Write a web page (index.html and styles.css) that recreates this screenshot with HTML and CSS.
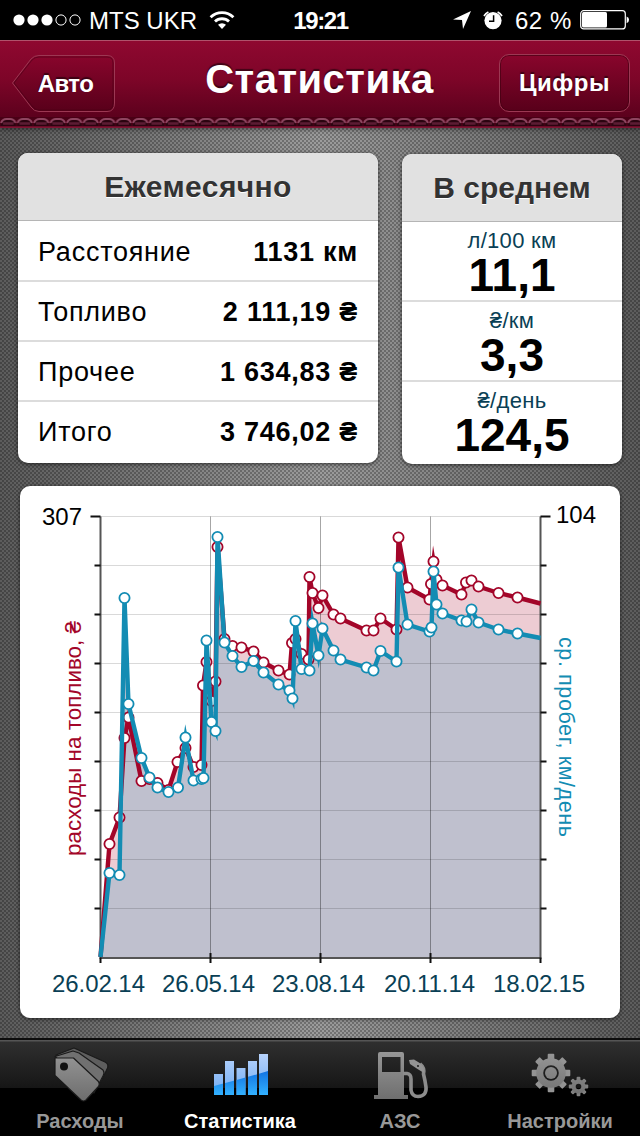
FILE: index.html
```html
<!DOCTYPE html>
<html lang="ru">
<head>
  <meta charset="UTF-8">
  <meta name="viewport" content="width=device-width, initial-scale=1.0">
  <title>Статистика</title>
  <link rel="stylesheet" href="styles.css">
</head>
<body>
  <!-- Status bar -->
  <div class="status-bar">
    <div class="status-left">
      <svg class="signal" width="68" height="12" viewBox="0 0 68 12">
        <g fill="#fff">
          <circle cx="6" cy="6" r="5.6"/>
          <circle cx="20" cy="6" r="5.6"/>
          <circle cx="34" cy="6" r="5.6"/>
        </g>
        <g fill="none" stroke="#fff">
          <circle cx="48" cy="6" r="5.1"/>
          <circle cx="62" cy="6" r="5.1"/>
        </g>
      </svg>
      <span class="carrier">MTS UKR</span>
      <svg class="wifi" width="26" height="20" viewBox="0 0 26 20">
        <g fill="none" stroke="#fff" stroke-width="2.8">
          <path d="M1.6 7.2 A16.3 16.3 0 0 1 24.4 7.2"/>
          <path d="M6 11.6 A10 10 0 0 1 20 11.6"/>
        </g>
        <path d="M9 14.8 A5.8 5.8 0 0 1 17 14.8 L13 19 Z" fill="#fff"/>
      </svg>
    </div>
    <span class="clock">19:21</span>
    <div class="status-right">
      <svg width="18" height="18" viewBox="0 0 18 18"><path d="M18 0 L0 8.4 L9 9 L10 18 Z" fill="#fff"/></svg>
      <svg class="alarm" width="20" height="19" viewBox="0 0 20 19">
        <circle cx="10" cy="9.6" r="8.6" fill="#fff"/>
        <path d="M1 5 A11 11 0 0 1 5.4 1 M14.6 1 A11 11 0 0 1 19 5" fill="none" stroke="#fff" stroke-width="1.7"/>
        <path d="M10.6 4.2 V10.2 H6" fill="none" stroke="#000" stroke-width="1.5"/>
      </svg>
      <span class="percent">62 %</span>
      <svg width="50" height="20" viewBox="0 0 50 20">
        <rect x="0.7" y="0.7" width="44.6" height="18.2" rx="3" fill="none" stroke="#fff" stroke-width="1.2"/>
        <rect x="2" y="2" width="25" height="15.6" rx="1.5" fill="#fff"/>
        <path d="M46.6 6.4 A3.6 3.6 0 0 1 46.6 13.2 Z" fill="#fff"/>
      </svg>
    </div>
  </div>

  <!-- Navigation bar -->
  <header class="nav-bar">
    <div class="nav-row">
      <button class="nav-button back">
        <svg class="back-shape" width="106" height="60" viewBox="0 0 106 60">
          <defs>
            <linearGradient id="backFill" x1="0" y1="0" x2="0" y2="1">
              <stop offset="0" stop-color="#89052c"/>
              <stop offset="1" stop-color="#58001a"/>
            </linearGradient>
          </defs>
          <path d="M1.5 29 L20 5 Q23 1.5 28 1.5 H96 Q103.5 1.5 103.5 9 V49 Q103.5 57.5 96 57.5 H28 Q23 57.5 20 53 Z" fill="url(#backFill)" stroke="#9c3853" stroke-width="1"/>
          <path d="M3 29 L21 6 Q24 3 28 3 H96 Q102 3 102 9 V49 Q102 56 96 56 H28 Q24 56 21 52 Z" fill="none" stroke="#4a0015" stroke-opacity="0.6"/>
        </svg>
        <span class="back-label">Авто</span>
      </button>
      <h1>Статистика</h1>
      <button class="nav-button next">Цифры</button>
    </div>
    <svg class="stitches" width="640" height="10" viewBox="0 0 640 10">
      <defs>
        <pattern id="stitch" width="16.5" height="10" patternUnits="userSpaceOnUse">
          <rect width="16.5" height="10" fill="#4a0016"/>
          <path d="M0.5 9 Q1 2 6 1.5 H10.500 Q15.500 2 16 9 Z" fill="#2b0410"/>
          <path d="M1 6 Q2.500 2 6.500 2 H10 Q14 2 15.500 6" fill="none" stroke="#8f4560" stroke-width="2"/>
          <path d="M3 6.500 H13.500" stroke="#5c1c33" stroke-width="2.500"/>
          <path d="M0 9.500 H16.500" stroke="#6b0a28"/>
        </pattern>
      </defs>
      <rect width="640" height="10" fill="url(#stitch)"/>
    </svg>
  </header>

  <main class="content">
    <div class="cards">
      <section class="card monthly">
        <h2>Ежемесячно</h2>
        <div class="row"><span>Расстояние</span><b>1131 км</b></div>
        <div class="row"><span>Топливо</span><b>2 111,19 ₴</b></div>
        <div class="row"><span>Прочее</span><b>1 634,83 ₴</b></div>
        <div class="row"><span>Итого</span><b>3 746,02 ₴</b></div>
      </section>
      <section class="card average">
        <h2>В среднем</h2>
        <div class="stat"><span>л/100 км</span><b>11,1</b></div>
        <div class="stat"><span>₴/км</span><b>3,3</b></div>
        <div class="stat"><span>₴/день</span><b>124,5</b></div>
      </section>
    </div>

    <section class="card chart-card">
      <svg id="chart" width="600" height="532" viewBox="20 486 600 532">
        <g id="areas"></g>
        <g id="grid"></g>
        <g id="axes"></g>
        <g id="lines"></g>
        <g class="scale">
          <text x="42" y="525" textLength="40" lengthAdjust="spacingAndGlyphs">307</text>
          <text x="556" y="523" textLength="40" lengthAdjust="spacingAndGlyphs">104</text>
        </g>
        <g class="dates">
          <text x="52" y="992" textLength="93">26.02.14</text>
          <text x="162" y="992" textLength="93">26.05.14</text>
          <text x="272" y="992" textLength="93">23.08.14</text>
          <text x="384" y="992" textLength="91">20.11.14</text>
          <text x="493" y="992" textLength="92">18.02.15</text>
        </g>
        <text class="axis-title red" transform="translate(80.5 856) rotate(-90)" textLength="235" lengthAdjust="spacingAndGlyphs">расходы на топливо, ₴</text>
        <text class="axis-title blue" transform="translate(558.5 637) rotate(90)" textLength="200">ср. пробег, км/день</text>
      </svg>
    </section>
  </main>

  <!-- Tab bar -->
  <nav class="tab-bar">
    <a class="tab">
      <svg width="60" height="60" viewBox="50 1044 60 60">
        <defs>
          <linearGradient id="iconGray" gradientUnits="userSpaceOnUse" x1="0" y1="1046" x2="0" y2="1102">
            <stop offset="0" stop-color="#9c9c9c"/>
            <stop offset="1" stop-color="#6c6c6c"/>
          </linearGradient>
        </defs>
        <g stroke="#1a1a1a" stroke-width="1.2" stroke-linejoin="round">
          <path d="M56 1055 L74 1048 L105 1062 Q109 1064 107.5 1068 L101 1082 Z" fill="#5e5e5e"/>
          <path d="M55 1056.5 L73 1051 L79 1053 L103 1070 Q105 1073 103 1076 L94 1093 Z" fill="#707070"/>
          <path d="M55 1058 H73.5 L98 1081 Q100.5 1084 98 1087 L86 1100 Q83.5 1102 81 1100 L55 1075.5 Z" fill="url(#iconGray)"/>
        </g>
        <circle cx="64" cy="1066.5" r="4" fill="#111"/>
      </svg>
      <span>Расходы</span>
    </a>
    <a class="tab active">
      <svg width="60" height="60" viewBox="210 1044 60 60">
        <defs>
          <linearGradient id="barTop" x1="0" y1="0" x2="0" y2="1">
            <stop offset="0" stop-color="#b6d2fb"/>
            <stop offset="1" stop-color="#71acf3"/>
          </linearGradient>
          <linearGradient id="barBottom" x1="0" y1="0" x2="0" y2="1">
            <stop offset="0" stop-color="#1273e2"/>
            <stop offset="1" stop-color="#32b1ff"/>
          </linearGradient>
          <clipPath id="bars">
            <path d="M214 1074h9v21h-9z M225 1061h9v34h-9z M236.5 1068h9v27h-9z M248 1061h9v34h-9z M259 1054h9v41h-9z"/>
          </clipPath>
        </defs>
        <g clip-path="url(#bars)">
          <rect x="214" y="1054" width="54" height="41" fill="url(#barTop)"/>
          <path d="M214 1086 Q242 1079 268 1071 V1095 H214 Z" fill="url(#barBottom)"/>
        </g>
      </svg>
      <span>Статистика</span>
    </a>
    <a class="tab">
      <svg width="60" height="60" viewBox="370 1044 60 60">
        <path fill-rule="evenodd" d="M378 1054 Q378 1052 380 1052 H402 Q404 1052 404 1054 V1095 H408 V1099 H374 V1095 H378 Z M382 1057 V1072 H400.5 V1057 Z" fill="url(#iconGray)"/>
        <path d="M403 1073.5 H407 Q411 1074 411 1079 V1090 Q412 1096.5 418 1096.5 Q427 1096 426 1087 Q425 1080 423.5 1074 Q425 1068 420 1064" fill="none" stroke="#8c8c8c" stroke-width="3.6"/>
        <path d="M409 1060 L414 1059.5 L420.5 1063.5 Q425 1068 424 1073 L417.5 1069 L410 1064 Z" fill="#949494"/>
        <circle cx="418" cy="1066" r="0.9" fill="#111"/>
      </svg>
      <span>АЗС</span>
    </a>
    <a class="tab">
      <svg width="60" height="60" viewBox="530 1044 60 60">
        <g id="gears" fill="url(#iconGray)" stroke="url(#iconGray)"></g>
      </svg>
      <span>Настройки</span>
    </a>
  </nav>

  <script>
    // points are [x, y] in chart units, y grows downwards
    const cost = [
      [100.5,957],[109.5,844],[119.5,817.5],[124.5,738],[128.5,717.5],[141.5,781],[149.5,779],[157.5,783],
      [168.5,790],[177.5,762],[185.5,748],[193.5,767],[201.5,765],[203,685.5],[206.5,662],[211.5,701],
      [215.5,681.5],[217.5,547],[224.5,639],[232.5,646],[241.5,647.5],[253.5,651.5],[263.5,662.5],
      [278.5,670.5],[289.5,674.5],[292,643],[295.5,639],[301.5,654],[308.5,659.5],[309.5,577],
      [312.5,593],[318.5,608],[322.5,595.5],[333.5,614.5],[340.5,618.5],[366.5,630.5],[373.5,630.5],
      [380.5,618.5],[396.5,629.5],[398.5,537.5],[407.5,587.5],[429.5,599.5],[431,584],[433.5,561.5],
      [436.5,579.5],[442.5,585.5],[461.5,594.5],[466,582.5],[471.5,580.5],[478.5,586.5],[498.5,593],
      [517.5,597.5],[540.5,603.5]
    ];
    const mileage = [
      [100.5,957],[109.5,873],[119.5,875],[124.5,598],[128.5,704],[141.5,758],[149.5,777.5],[157.5,787.5],
      [168.5,792],[178,787.5],[185.5,737.5],[193.5,780.5],[201.5,779],[203.5,778],[206.5,640.5],[211.5,722],
      [215.5,731],[217.5,537],[224.5,642.5],[232.5,656],[241.5,667],[253.5,661],[263.5,672.5],
      [278.5,684.5],[289.5,690.5],[292.5,698.5],[295.5,621],[301.5,669],[309.5,670.5],[312.5,623.5],
      [318.5,655.5],[322.5,628.5],[333.5,650.5],[340.5,659.5],[366.5,667.5],[373.5,670.5],[380.5,651],
      [396.5,661.5],[398.5,567.5],[407.5,624.5],[429.5,631.5],[431.5,627.5],[433.5,571.5],[436.5,604.5],
      [442.5,613.5],[461.5,620.5],[466.5,621.5],[471.5,609.5],[478.5,622.5],[498.5,629.5],[517.5,633.5],
      [540.5,638]
    ];

    const left = 100.5, right = 540.5, top_ = 516.5, bottom = 957.5;

    function drawArea(points, name) {
      return `<polygon class="${name}" points="${points.join(' ')} ${right},${bottom} ${left},${bottom}"/>`;
    }

    function drawLine(points, name) {
      const dots = points.slice(1, -1).map(p => `<circle cx="${p[0]}" cy="${p[1]}" r="5.1"/>`).join('');
      return `<g class="${name}"><polyline points="${points.join(' ')}"/>${dots}</g>`;
    }

    let grid = '', axes = '';
    for (let i = 0; i < 9; i++) {
      const y = top_ + i * 49;
      const len = i === 0 ? 10 : 6;
      grid += `<path class="h" d="M${left} ${y}H${right}"/>`;
      axes += `<path class="tick" d="M${left - len} ${y}H${left} M${right} ${y}H${right + len}"/>`;
    }
    for (let i = 0; i < 5; i++) {
      const x = left + i * 110;
      if (i > 0 && i < 4) grid += `<path class="v" d="M${x} ${top_}V${bottom}"/>`;
      axes += `<path class="tick" d="M${x} ${i % 4 ? 953 : bottom}V963"/>`;
    }
    axes = `<path class="frame" d="M${left} ${top_}V${bottom + 0.5}H${right}V${top_}"/>` + axes;

    document.getElementById('areas').innerHTML = drawArea(cost, 'area-cost') + drawArea(mileage, 'area-mileage');
    document.getElementById('grid').innerHTML = grid;
    document.getElementById('axes').innerHTML = axes;
    document.getElementById('lines').innerHTML = drawLine(cost, 'cost') + drawLine(mileage, 'mileage');

    // a gear is a thick ring with eight teeth round it
    function drawGear(cx, cy, r, hole, tooth, w) {
      let teeth = '';
      for (let a = 0; a < 8; a++) {
        teeth += `<rect x="${cx - w / 2}" y="${cy - r - tooth}" width="${w}" height="${tooth + 2}" rx="1" stroke="none" transform="rotate(${a * 45} ${cx} ${cy})"/>`;
      }
      const mid = (r + hole) / 2;
      return teeth + `<circle cx="${cx}" cy="${cy}" r="${mid}" fill="none" stroke-width="${r - hole}"/>`;
    }
    document.getElementById('gears').innerHTML =
      drawGear(551, 1073, 14.8, 7.8, 4.5, 6.6) +
      '<circle cx="551" cy="1073" r="6" stroke="none"/>' +
      drawGear(578.5, 1086.5, 7, 2.8, 2.7, 3.8);
  </script>
</body>
</html>
```
FILE: styles.css
```css
* {
  box-sizing: border-box;
}

body {
  margin: 0;
  width: 640px;
  height: 1136px;
  display: flex;
  flex-direction: column;
  overflow: hidden;
  font-family: "Liberation Sans", Arial, sans-serif;
  background:
    conic-gradient(rgba(0, 0, 0, 0.26) 25%, transparent 0 50%, rgba(0, 0, 0, 0.26) 0 75%, transparent 0) 0 0 / 4px 4px,
    linear-gradient(90deg, #5c5c5c, #9c9c9c 50%, #5c5c5c);
}

svg {
  display: block;
  flex: none;
}

h1, h2 {
  margin: 0;
}

/* status bar */
.status-bar {
  height: 40px;
  flex: none;
  display: grid;
  grid-template-columns: 1fr auto 1fr;
  align-items: center;
  padding: 0 10px 0 13px;
  background: #000;
  color: #fff;
  font-size: 24px;
}

.status-left,
.status-right {
  display: flex;
  align-items: center;
}

.status-right {
  justify-content: flex-end;
}

.carrier {
  margin: 1px 12px 0 8px;
}

.clock {
  font-weight: bold;
  margin: 1px 2px 0 0;
  letter-spacing: -1.4px;
}

.alarm {
  margin: 0 12px 0 12px;
}

.percent {
  margin: 1px 8px 0 0;
  letter-spacing: 0.6px;
}

/* leather navigation bar */
.nav-bar {
  height: 88px;
  flex: none;
  display: flex;
  flex-direction: column;
  justify-content: space-between;
  border-top: 1px solid #b0526b;
  border-bottom: 1px solid #7d1734;
  background: linear-gradient(#8f0830, #7d0528 45%, #53001a);
  box-shadow: 0 1px 5px rgba(0, 0, 0, 0.5);
}

.nav-row {
  display: grid;
  grid-template-columns: 106px 1fr 131px;
  padding: 13px 10px 0 11px;
}

.nav-button {
  height: 60px;
  padding: 0;
  border: none;
  background: none;
  color: #fff;
  font: bold 24px "Liberation Sans", Arial, sans-serif;
  text-shadow: 0 -2px 1px rgba(0, 0, 0, 0.5);
}

.back {
  display: grid;
}

.back-shape,
.back-label {
  grid-area: 1 / 1;
}

.back-label {
  align-self: center;
  padding-left: 3px;
  letter-spacing: -0.6px;
}

.next {
  height: 58px;
  border: 1px solid #9c3853;
  border-radius: 10px;
  background: linear-gradient(#89052c, #58001a);
  box-shadow: inset 0 0 0 1px rgba(60, 0, 15, 0.6);
  letter-spacing: 0.5px;
}

h1 {
  color: #fff;
  font-size: 40px;
  line-height: 50px;
  letter-spacing: 0.5px;
  padding-left: 24px;
  text-align: center;
  text-shadow: 0 -2px 1px rgba(0, 0, 0, 0.5);
  padding-right: 1px;
}

/* cards */
.content {
  flex: 1;
  padding: 25px 18px 0;
}

.cards {
  display: flex;
  justify-content: space-between;
}

.card {
  background: #fff;
  border-radius: 10px;
  overflow: hidden;
  box-shadow: 0 1px 4px rgba(0, 0, 0, 0.6);
}

.monthly {
  width: 360px;
  height: 310px;
}

.average {
  width: 220px;
  height: 310px;
  margin-top: 1px;
}

h2 {
  height: 68px;
  line-height: 67px;
  background: #e1e1e1;
  border-bottom: 1px solid #b5b5b5;
  color: #333;
  font-size: 30px;
  text-align: center;
  text-shadow: 0 1px 0 #fff;
}

.monthly h2 {
  letter-spacing: 0.4px;
}

.row {
  height: 60px;
  display: flex;
  justify-content: space-between;
  align-items: center;
  padding: 3px 20px 0;
  font-size: 27px;
  letter-spacing: 0.75px;
  border-bottom: 2px solid #dcdcdc;
}

h2 + .row {
  height: 61px;
}

.row:last-child,
.stat:last-child {
  border-bottom: none;
}

.row:last-child {
  padding-top: 1px;
}

.stat {
  height: 80px;
  padding-top: 6px;
  text-align: center;
  border-bottom: 2px solid #dcdcdc;
}

.stat span {
  display: block;
  font-size: 22px;
  line-height: 26px;
  letter-spacing: 0.3px;
  color: #0a3f55;
}

.stat b {
  display: block;
  font-size: 46px;
  line-height: 42px;
}

.chart-card {
  width: 600px;
  margin: 22px 0 0 2px;
}

/* chart */
.area-cost {
  fill: #edccd3;
}

.area-mileage {
  fill: #bfc0ce;
}

.h {
  stroke: rgba(0, 0, 0, 0.15);
}

.v {
  stroke: rgba(0, 0, 0, 0.35);
}

.frame {
  fill: none;
  stroke: #555;
  stroke-width: 2;
}

.tick {
  stroke: #111;
  stroke-width: 2;
}

.cost,
.mileage {
  fill: none;
  stroke-width: 4.4;
  stroke-miterlimit: 10;
}

.cost {
  stroke: #a30529;
}

.mileage {
  stroke: #138cb3;
}

.cost circle,
.mileage circle {
  fill: #fff;
  stroke-width: 1.8;
}

.scale {
  font-size: 24px;
}

.dates {
  font-size: 24px;
  fill: #0a3f55;
}

.axis-title {
  font-size: 21.5px;
}

.red {
  fill: #a30529;
}

.blue {
  fill: #138cb3;
}

/* tab bar */
.tab-bar {
  height: 98px;
  flex: none;
  display: grid;
  grid-template-columns: repeat(4, 1fr);
  border-top: 2px solid #0c0c0c;
  background: linear-gradient(#555 0 1px, #2f2f2f 2px, #161616 48px, #000 48px);
}

.tab {
  display: flex;
  flex-direction: column;
  align-items: center;
  padding-top: 4px;
  color: #989898;
  font-size: 20px;
  font-weight: bold;
}

.tab span {
  margin-top: 6px;
}

.active {
  color: #fff;
}
```
